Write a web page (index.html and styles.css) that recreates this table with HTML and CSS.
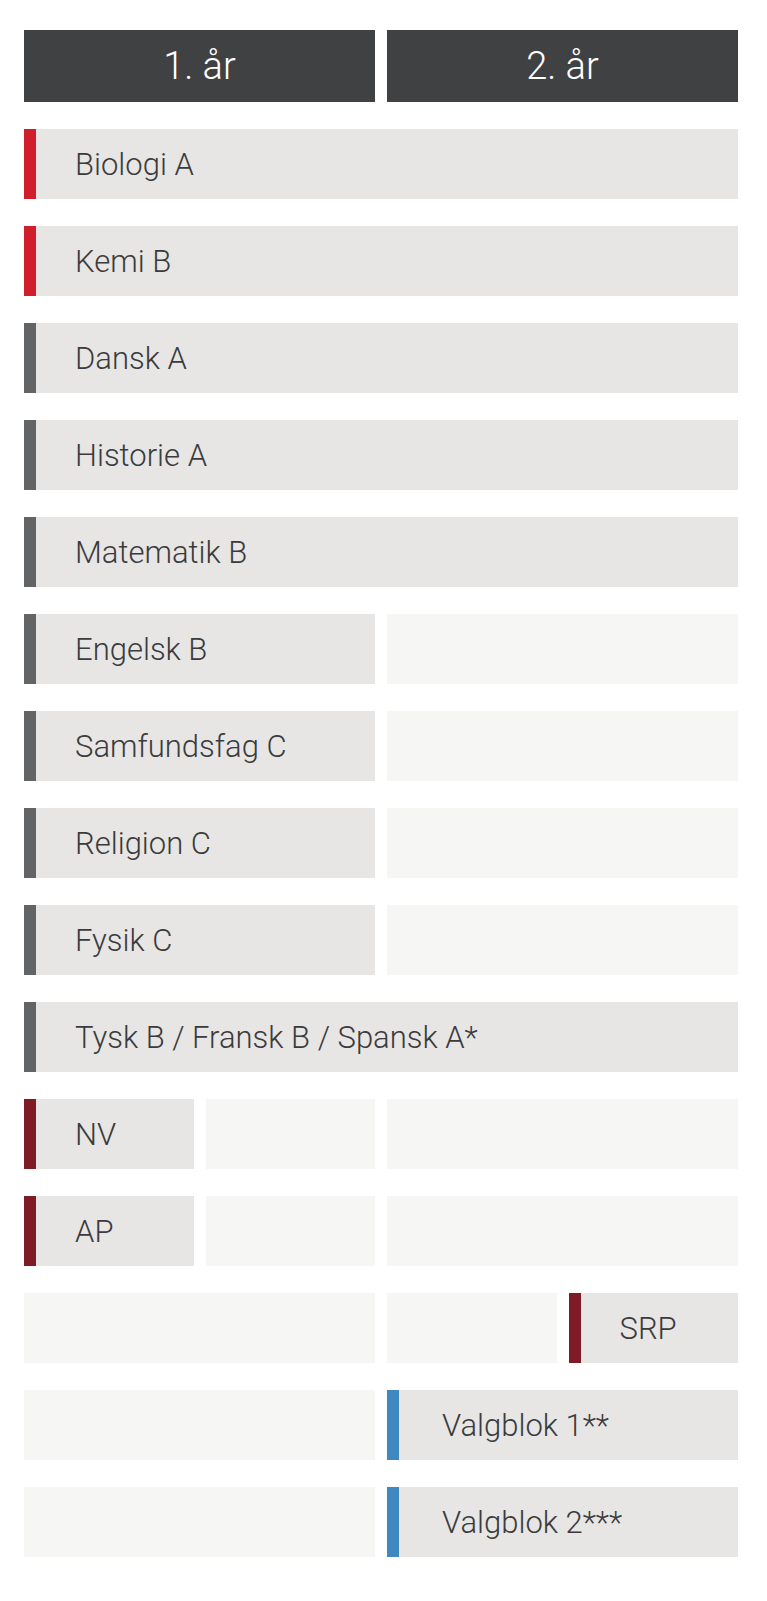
FILE: index.html
```html
<!DOCTYPE html>
<html lang="da">
<head>
    <meta charset="UTF-8">
    <meta name="viewport" content="width=device-width, initial-scale=1.0">
    <title>Fagplan</title>
    <link rel="stylesheet" href="styles.css">
</head>
<body>
    <div class="plan">
        <div class="year span-2">1. år</div>
        <div class="year span-2">2. år</div>

        <div class="subject red span-4">Biologi A</div>
        <div class="subject red span-4">Kemi B</div>
        <div class="subject gray span-4">Dansk A</div>
        <div class="subject gray span-4">Historie A</div>
        <div class="subject gray span-4">Matematik B</div>

        <div class="subject gray span-2">Engelsk B</div>
        <div class="empty span-2"></div>
        <div class="subject gray span-2">Samfundsfag C</div>
        <div class="empty span-2"></div>
        <div class="subject gray span-2">Religion C</div>
        <div class="empty span-2"></div>
        <div class="subject gray span-2">Fysik C</div>
        <div class="empty span-2"></div>

        <div class="subject gray span-4">Tysk B / Fransk B / Spansk A*</div>

        <div class="subject maroon">NV</div>
        <div class="empty"></div>
        <div class="empty span-2"></div>
        <div class="subject maroon">AP</div>
        <div class="empty"></div>
        <div class="empty span-2"></div>

        <div class="empty span-2"></div>
        <div class="empty"></div>
        <div class="subject maroon">SRP</div>

        <div class="empty span-2"></div>
        <div class="subject blue span-2 wide">Valgblok 1**</div>
        <div class="empty span-2"></div>
        <div class="subject blue span-2 wide">Valgblok 2***</div>
    </div>
</body>
</html>
```

FILE: styles.css
```css
body {
    margin: 0;
    background: #fff;
    font-family: Roboto, "Liberation Sans", sans-serif;
}
.plan {
    display: grid;
    grid-template-columns: repeat(4, 1fr);
    grid-template-rows: 72px;
    grid-auto-rows: 70px;
    column-gap: 12px;
    row-gap: 27px;
    width: 714px;
    margin: 30px 0 0 24px;
}
.span-2 {
    grid-column: span 2;
}
.span-4 {
    grid-column: span 4;
}
.year {
    display: flex;
    align-items: center;
    justify-content: center;
    background-color: #404143;
    color: #fff;
    font-size: 38px;
    font-weight: 300;
}
.subject {
    display: flex;
    align-items: center;
    padding-left: 39px;
    border-left: 12px solid #636466;
    background-color: #e7e6e4;
    color: #3b3b3d;
    font-size: 31px;
    font-weight: 300;
}
.subject.wide {
    padding-left: 43px;
}
.subject.red {
    border-left-color: #d01f2a;
}
.subject.gray {
    border-left-color: #636466;
}
.subject.maroon {
    border-left-color: #7d1c26;
}
.subject.blue {
    border-left-color: #3f88c0;
}
.empty {
    background-color: #f6f6f4;
}
```
